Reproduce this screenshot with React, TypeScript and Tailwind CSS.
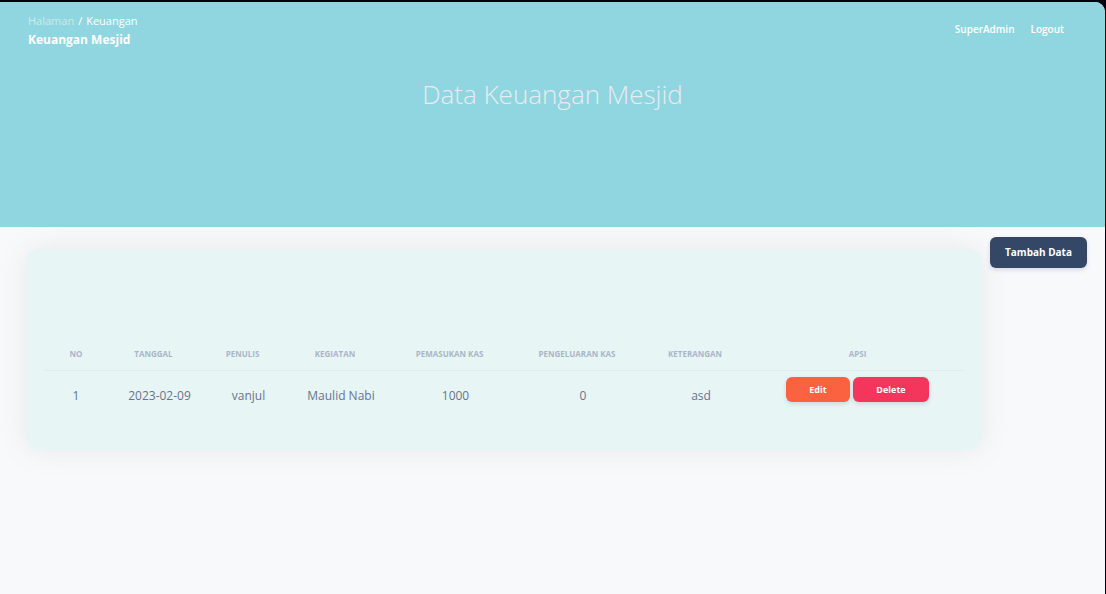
const columns = [
  { label: 'NO', width: 'w-[62px]' },
  { label: 'TANGGAL', width: 'w-[105px]' },
  { label: 'PENULIS', width: 'w-[73px]' },
  { label: 'KEGIATAN', width: 'w-[112px]' },
  { label: 'PEMASUKAN KAS', width: 'w-[117px]' },
  { label: 'PENGELUARAN KAS', width: 'w-[138px]' },
  { label: 'KETERANGAN', width: 'w-[98px]' },
  { label: 'APSI', width: '' },
];

const rows = [['1', '2023-02-09', 'vanjul', 'Maulid Nabi', '1000', '0', 'asd']];

function Header() {
  return (
    <header className="h-[225px] bg-[#90d6e0] text-white">
      <div className="flex items-start justify-between pl-7 pr-[41px] pt-[11px]">
        <nav aria-label="Breadcrumb">
          <ol className="flex gap-1 text-[11px] leading-[15px]">
            <li><a href="#halaman" className="text-white/50">Halaman</a></li>
            <li aria-hidden="true">/</li>
            <li>Keuangan</li>
          </ol>
          <h6 className="mt-1 text-[12px] font-bold leading-[15px]">Keuangan Mesjid</h6>
        </nav>
        <nav className="flex gap-4 pt-2 text-[10px] font-semibold leading-[17px]">
          <a href="#profile">SuperAdmin</a>
          <a href="#logout">Logout</a>
        </nav>
      </div>
      <h1 className="mt-[29px] text-center text-[26px] font-light leading-9 text-[#e9ecef]">Data Keuangan Mesjid</h1>
    </header>
  );
}

function DataTable() {
  return (
    <table className="w-full table-fixed border-collapse text-center">
      <thead>
        <tr className="border-b border-[#e2eced] text-[8px] leading-3 text-[#a9b6c8]">
          {columns.map((c, i) => (
            <th
              key={c.label}
              scope="col"
              className={`${c.width} whitespace-nowrap pb-[10px] font-bold ${i > 0 && i < 7 ? 'pr-3' : ''}`}
            >
              {c.label}
            </th>
          ))}
        </tr>
      </thead>
      <tbody>
        {rows.map((row) => (
          <tr key={row[0]} className="text-[12px] leading-4 text-[#67748e]">
            {row.map((value, i) => (
              <td key={i} className="whitespace-nowrap pt-[17px] align-top">{value}</td>
            ))}
            <td className="pt-[6px] align-top">
              <div className="flex justify-center gap-[3px] text-[9px] font-bold text-white">
                <button type="button" className="h-[25px] w-16 rounded-[6px] bg-[#fb6340] shadow-[0_2px_4px_rgba(50,50,93,0.15)]">Edit</button>
                <button type="button" className="h-[25px] w-[76px] rounded-[6px] bg-[#f5365c] shadow-[0_2px_4px_rgba(50,50,93,0.15)]">Delete</button>
              </div>
            </td>
          </tr>
        ))}
      </tbody>
    </table>
  );
}

export default function App() {
  return (
    <div className="flex min-h-screen flex-col bg-[#02020f] pr-px pt-[2px] font-['Open_Sans',sans-serif]">
      <div className="grow overflow-hidden rounded-tr-[10px] bg-[#f8f9fb]">
        <Header />
        <main className="flex items-start gap-2 pl-[26px] pr-[18px]">
          <section className="mt-[22px] min-w-0 grow rounded-[14px] bg-[#e8f5f5] pb-[46px] pl-[19px] pr-[17px] pt-[99px] shadow-[0_0_28px_rgba(136,136,136,0.14)]">
            <DataTable />
          </section>
          <button type="button" className="mt-[10px] h-[31px] w-[97px] shrink-0 rounded-[6px] bg-[#344767] text-[10px] font-bold text-white shadow-[0_2px_4px_rgba(50,50,93,0.15)]">
            Tambah Data
          </button>
        </main>
      </div>
    </div>
  );
}
